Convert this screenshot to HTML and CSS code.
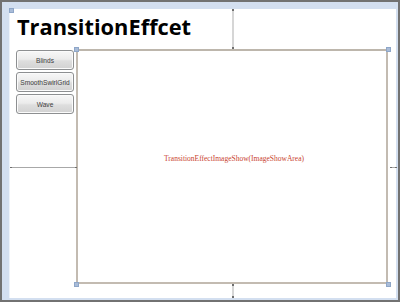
FILE: index.html
```html
<!DOCTYPE html>
<html lang="en">
<head>
    <meta charset="UTF-8">
    <title>TransitionEffcet</title>
    <link rel="stylesheet" href="styles.css">
</head>
<body class="page">
<div class="window">
    <div class="surface">
        <span class="mark mark-tl"></span>
        <h1 class="title">TransitionEffcet</h1>
        <div class="stage">
            <div class="buttons">
                <button class="btn">Blinds</button>
                <button class="btn">SmoothSwirlGrid</button>
                <button class="btn">Wave</button>
            </div>
            <div class="show-area">
                <span class="show-text">TransitionEffectImageShow(ImageShowArea)</span>
                <span class="mark area-tl"></span>
                <span class="mark area-tr"></span>
                <span class="mark area-bl"></span>
                <span class="mark area-br"></span>
            </div>

            <!-- margin guides -->
            <span class="guide-v guide-top"></span>
            <span class="guide-v guide-bottom"></span>
            <span class="guide-h guide-left"></span>
            <span class="guide-h guide-right"></span>
        </div>
    </div>
</div>
</body>
</html>
```

FILE: styles.css
```css
body {
    margin: 0;
}

.window {
    box-sizing: border-box;
    width: 400px;
    height: 302px;
    border: 2px solid #727272;
    background: #d3dff0;
    padding: 7px 2px 2px 7px;
}

.surface {
    position: relative;
    height: 100%;
    background: #fff;
    border-left: 1px solid #eef3fa;
    box-sizing: border-box;
}

.title {
    margin: 0;
    padding: 6px 0 0 7px;
    font-family: "Open Sans", "Liberation Sans", sans-serif;
    font-weight: 700;
    font-size: 21.8px;
    line-height: 24px;
    color: #000;
}

.stage {
    position: relative;
    display: flex;
    margin-top: 10px;
    padding-left: 6px;
}

.buttons {
    display: flex;
    flex-direction: column;
    gap: 2px;
    width: 58px;
    margin-top: 1px;
}

.btn {
    height: 20px;
    padding: 0;
    border: 1px solid #8d8f91;
    border-radius: 3px;
    background: linear-gradient(#f7f7f7 0%, #ececec 45%, #dedede 55%, #d2d2d2 100%);
    box-shadow: inset 0 0 0 1px #fbfbfb;
    font-family: "Liberation Sans", Arial, sans-serif;
    font-size: 6.6px;
    color: #3c3c3c;
}

.show-area {
    position: relative;
    display: flex;
    align-items: center;
    justify-content: center;
    box-sizing: border-box;
    width: 312px;
    height: 235px;
    margin-left: 2px;
    border: 2px solid #c3bbb1;
    border-top-color: #bdb6ac;
}

.show-text {
    margin-top: -17px;
    margin-left: 4px;
    font-family: "Liberation Serif", "Times New Roman", serif;
    font-size: 7.5px;
    color: #c9442f;
}

.mark {
    position: absolute;
    width: 3px;
    height: 3px;
    background: #a9bcd8;
    border: 1px solid #8ea6c8;
}

.mark-tl {
    top: -1px;
    left: -1px;
}

.area-tl { top: -4px; left: -4px; }
.area-tr { top: -4px; right: -5px; }
.area-bl { bottom: -5px; left: -4px; }
.area-br { bottom: -5px; right: -5px; }

.guide-v {
    position: absolute;
    left: 222px;
    width: 2px;
    background: #d6d6d6;
    border-top: 2px solid #6f6f6f;
    border-bottom: 2px solid #6f6f6f;
    box-sizing: border-box;
}

.guide-top {
    top: -40px;
    height: 40px;
}

.guide-bottom {
    top: 235px;
    height: 14px;
}

.guide-h {
    position: absolute;
    top: 118px;
    height: 1px;
    background: #a8a8a8;
    border-left: 2px solid #6f6f6f;
    border-right: 2px solid #6f6f6f;
    box-sizing: border-box;
}

.guide-left {
    left: 0;
    width: 67px;
}

.guide-right {
    left: 380px;
    width: 7px;
}
```
